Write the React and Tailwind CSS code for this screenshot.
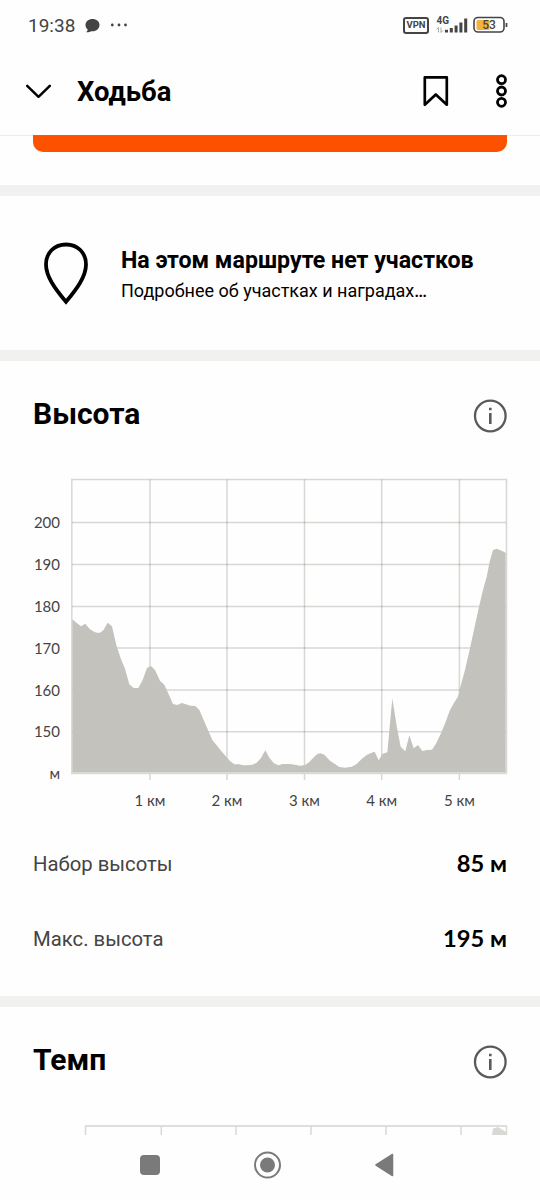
import React from "react";

const yTicks = [
  { y: 52.5, label: "200" },
  { y: 94.5, label: "190" },
  { y: 136.5, label: "180" },
  { y: 178, label: "170" },
  { y: 220, label: "160" },
  { y: 261.8, label: "150" },
];

const xTicks = [
  { x: 150, label: "1 км" },
  { x: 227, label: "2 км" },
  { x: 304.5, label: "3 км" },
  { x: 381.7, label: "4 км" },
  { x: 459.4, label: "5 км" },
];

const paceTicks = [85.5, 161.3, 236, 311, 386, 461, 506.5];

const elevation =
  "157,548 157,88 170,99 183,109 196,101 209,117 222,125 230,128 240,128 250,121 263,98 276,109 289,165 302,205 315,236 328,283 341,294 355,294 368,270 381,234 393,228 405,240 420,272 433,284 446,313 459,342 472,345 485,339 498,343 511,347 526,348 538,360 551,390 564,420 577,450 590,466 603,482 617,498 630,513 643,523 657,523 670,526 684,526 697,524 710,518 723,504 736,481 748,503 762,520 775,526 788,522 810,522 825,524 840,527 855,525 868,516 880,503 892,492 902,490 913,494 930,512 945,522 958,531 975,533 995,530 1010,522 1025,507 1040,495 1055,488 1064,485 1076,511 1088,491 1102,487 1117,325 1130,408 1142,470 1156,484 1168,436 1181,475 1194,465 1207,483 1220,480 1236,479 1249,459 1263,430 1276,398 1289,362 1302,338 1314,320 1320,295 1335,240 1350,175 1364,110 1377,50 1389,0 1400,-40 1409,-85 1419,-120 1430,-124 1440,-120 1457,-112 1457,548";

function StatusBar() {
  return (
    <div className="flex h-[50px] items-center pl-7 pr-8 text-[#444]">
      <span className="text-[19px] leading-none">19:38</span>
      <svg className="ml-[10px]" width="15" height="15" viewBox="0 0 15 15" fill="#444">
        <path d="M7.5 1C3.5 1 .5 3.6.5 7c0 2 1 3.700 2.400 4.800L1.300 14.200c2 .1 3.800-.4 4.800-1 .5.1 1 .1 1.400.1 4 0 7-2.800 7-6.300S11.500 1 7.500 1z" />
      </svg>
      <svg className="ml-[10px]" width="18" height="4" viewBox="0 0 18 4" fill="#444">
        <circle cx="2.300" cy="2" r="1.400" />
        <circle cx="9" cy="2" r="1.400" />
        <circle cx="15.500" cy="2" r="1.400" />
      </svg>
      <div className="ml-auto mr-[7px] flex h-[17px] w-[26px] items-center justify-center rounded-[3px] border-2 border-[#444] text-[9.5px] font-bold leading-none">
        VPN
      </div>
      <svg width="33" height="24" viewBox="0 -3 33 24" fill="#444">
        <text x="0.500" y="8" fontSize="10" fontWeight="700">4G</text>
        <path d="M2.500 16.500v-5M.500 13.500l2-2M5 11.500v5M7 14.500l-2 2" stroke="#aaa" strokeWidth="1" fill="none" />
        <rect x="9" y="13.800" width="3" height="2.700" />
        <rect x="13.800" y="12" width="3" height="4.500" />
        <rect x="18.600" y="9.500" width="3" height="7" />
        <rect x="23.400" y="6.500" width="3" height="10" />
        <rect x="28.200" y="2.500" width="3" height="14" />
      </svg>
      <svg className="ml-1" width="35" height="18" viewBox="0 0 35 18">
        <rect x="1" y="1.500" width="30" height="14.500" rx="4" fill="white" stroke="#444" strokeWidth="1.600" />
        <path d="M5 4h11.500v10H5a1.500 1.500 0 0 1-1.500-1.500v-7A1.500 1.500 0 0 1 5 4z" fill="#f5b13c" />
        <path d="M33.500 7v4" stroke="#444" strokeWidth="1.700" />
        <text x="16" y="13.300" fontSize="12" fontWeight="500" textAnchor="middle" fill="#444">53</text>
      </svg>
    </div>
  );
}

function Header() {
  return (
    <header className="flex h-[86px] items-center border-b border-[#ececec] pl-[25px] pr-8 pb-[3px]">
      <svg width="27" height="16" viewBox="0 0 27 16" fill="none" stroke="black" strokeWidth="2.500" strokeLinecap="round" strokeLinejoin="round">
        <path d="M2.200 2.800L13.500 13.800L24.800 2.800" />
      </svg>
      <h1 className="ml-[25px] pt-1 text-[27.4px] font-bold leading-none">Ходьба</h1>
      <svg className="ml-auto" width="26" height="32" viewBox="0 0 26 32" fill="none" stroke="black" strokeWidth="2.700" strokeLinejoin="round">
        <path d="M1.800 2.400h22v27.300L12.800 19.500L1.800 29.700z" />
      </svg>
      <svg className="ml-[46px]" width="13" height="36" viewBox="0 0 13 36" fill="none" stroke="black" strokeWidth="2.800">
        <circle cx="6.500" cy="6.700" r="4" />
        <circle cx="6.500" cy="18" r="4" />
        <circle cx="6.500" cy="29.300" r="4" />
      </svg>
    </header>
  );
}

function InfoIcon() {
  return (
    <svg width="34" height="34" viewBox="0 0 34 34" fill="none">
      <circle cx="17.300" cy="17" r="15.300" stroke="#5b5a58" strokeWidth="2.300" />
      <path d="M17.300 14v11M17.300 8.800v2.500" stroke="#5b5a58" strokeWidth="2.600" />
    </svg>
  );
}

function SectionTitle({ children }) {
  return (
    <div className="flex h-[34px] items-center justify-between px-[33px]">
      <h2 className="pb-[5px] text-[30px] font-bold leading-none">{children}</h2>
      <InfoIcon />
    </div>
  );
}

function ElevationChart() {
  return (
    <svg className="block" width="540" height="350" viewBox="0 0 540 350">
      <g stroke="#5a5a50" strokeOpacity="0.24" strokeWidth="1.500" fill="none">
        <path d="M71.800 303.500V9.400H506.500V303.500" />
        {yTicks.map((t) => (
          <path key={t.label} d={`M72 ${t.y}H506`} />
        ))}
        {xTicks.map((t) => (
          <path key={t.label} d={`M${t.x} 9.400V310`} />
        ))}
      </g>
      <polygon points={elevation} transform="translate(20 120) scale(0.33333)" fill="#c3c2bd" />
      <path d="M71 303.300H507" stroke="#d9d9d6" strokeWidth="2" />
      <g fill="#444" fontSize="15" className="font-[Lato,'Noto_Sans',sans-serif]">
        {yTicks.map((t) => (
          <text key={t.label} x="60" y={t.y + 5.5} textAnchor="end">{t.label}</text>
        ))}
        <text x="60" y="309" textAnchor="end">м</text>
        {xTicks.map((t) => (
          <text key={t.label} x={t.x} y="336" textAnchor="middle">{t.label}</text>
        ))}
      </g>
    </svg>
  );
}

function Stat({ label, value }) {
  return (
    <div className="flex h-[75px] items-center justify-between px-[33px]">
      <span className="pt-px text-[20.3px] text-[#444]">{label}</span>
      <span className="pt-px font-[Lato,'Noto_Sans',sans-serif] text-[23.7px] font-bold">{value}</span>
    </div>
  );
}

function Divider() {
  return <div className="h-[11px] bg-[#f1f1f0]" />;
}

function NavBar() {
  return (
    <nav className="flex h-[65px] items-center pb-[5px] pl-[140px]">
      <div className="size-5 rounded-[4px] bg-[#7a7a7a]" />
      <svg className="ml-[93px]" width="28" height="28" viewBox="0 0 28 28">
        <circle cx="14.500" cy="14" r="12.500" fill="none" stroke="#7a7a7a" strokeWidth="2" />
        <circle cx="14.500" cy="14" r="7.500" fill="#7a7a7a" />
      </svg>
      <svg className="ml-[93px]" width="20" height="24" viewBox="0 0 20 24">
        <path d="M2 12L18.500 1.500v21z" fill="#7a7a7a" stroke="#7a7a7a" strokeWidth="1.500" strokeLinejoin="round" />
      </svg>
    </nav>
  );
}

export default function App() {
  return (
    <main className="flex h-[1200px] w-[540px] flex-col overflow-hidden bg-[#fefefe] font-[Roboto,sans-serif] text-black">
      <StatusBar />
      <Header />
      <div className="-mt-px h-[50px] px-[33px]">
        <div className="h-[17px] rounded-b-[10px] border-t border-[#d9622a] bg-[#fc5200]" />
      </div>
      <Divider />
      <section className="flex h-[154px] items-center pl-[43px] pt-0.5">
        <svg width="46" height="64" viewBox="0 0 46 64" fill="none" stroke="black" strokeWidth="3.800">
          <path d="M23 2.500C11.500 2.500 3 10.500 3 22.500C3 34.500 12 46.500 23 59.800C34 46.500 43 34.500 43 22.500C43 10.500 34.500 2.500 23 2.500z" />
        </svg>
        <div className="ml-8 pt-px">
          <p className="text-[23.2px] font-bold leading-8">На этом маршруте нет участков</p>
          <p className="text-[18px] leading-[30px]">
            Подробнее об участках и наградах<span className="font-medium">…</span>
          </p>
        </div>
      </section>
      <Divider />
      <section className="h-[635px] pt-[38px]">
        <SectionTitle>Высота</SectionTitle>
        <div className="pt-[37px]">
          <ElevationChart />
        </div>
        <div className="pt-[6px]">
          <Stat label="Набор высоты" value="85 м" />
          <Stat label="Макс. высота" value="195 м" />
        </div>
      </section>
      <Divider />
      <section className="h-[128px] pt-[38px]">
        <SectionTitle>Темп</SectionTitle>
        <svg className="mt-[45px] block" width="540" height="11" viewBox="0 0 540 11">
          <path d="M85 2H507" stroke="#dededc" strokeWidth="1.800" />
          {paceTicks.map((x) => (
            <path key={x} d={`M${x} 2V11`} stroke="#d8d8d5" strokeWidth="1.500" />
          ))}
          <path d="M492 11L493 4.500L498 3L506 8V11z" fill="#d8d8d5" />
        </svg>
      </section>
      <NavBar />
    </main>
  );
}
